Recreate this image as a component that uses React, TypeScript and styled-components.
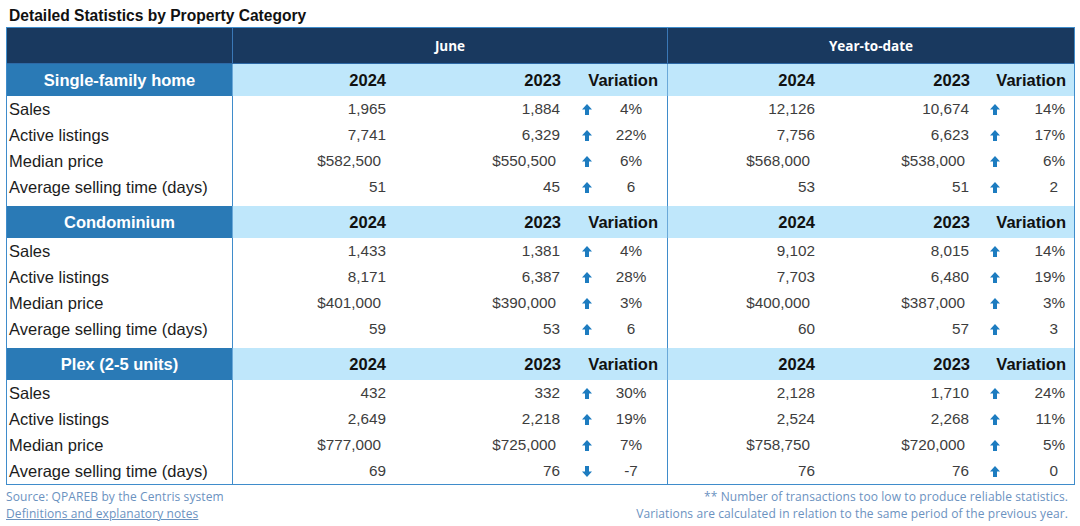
import React from 'react';
import styled, { createGlobalStyle } from 'styled-components';

type Dir = 'up' | 'down';

interface StatRow {
	label: string;
	june: [string, string, Dir, string];
	ytd: [string, string, Dir, string];
}

interface Category {
	name: string;
	rows: StatRow[];
}

const categories: Category[] = [
	{
		name: 'Single-family home',
		rows: [
			{ label: 'Sales', june: ['1,965', '1,884', 'up', '4%'], ytd: ['12,126', '10,674', 'up', '14%'] },
			{ label: 'Active listings', june: ['7,741', '6,329', 'up', '22%'], ytd: ['7,756', '6,623', 'up', '17%'] },
			{ label: 'Median price', june: ['$582,500', '$550,500', 'up', '6%'], ytd: ['$568,000', '$538,000', 'up', '6%'] },
			{ label: 'Average selling time (days)', june: ['51', '45', 'up', '6'], ytd: ['53', '51', 'up', '2'] },
		],
	},
	{
		name: 'Condominium',
		rows: [
			{ label: 'Sales', june: ['1,433', '1,381', 'up', '4%'], ytd: ['9,102', '8,015', 'up', '14%'] },
			{ label: 'Active listings', june: ['8,171', '6,387', 'up', '28%'], ytd: ['7,703', '6,480', 'up', '19%'] },
			{ label: 'Median price', june: ['$401,000', '$390,000', 'up', '3%'], ytd: ['$400,000', '$387,000', 'up', '3%'] },
			{ label: 'Average selling time (days)', june: ['59', '53', 'up', '6'], ytd: ['60', '57', 'up', '3'] },
		],
	},
	{
		name: 'Plex (2-5 units)',
		rows: [
			{ label: 'Sales', june: ['432', '332', 'up', '30%'], ytd: ['2,128', '1,710', 'up', '24%'] },
			{ label: 'Active listings', june: ['2,649', '2,218', 'up', '19%'], ytd: ['2,524', '2,268', 'up', '11%'] },
			{ label: 'Median price', june: ['$777,000', '$725,000', 'up', '7%'], ytd: ['$758,750', '$720,000', 'up', '5%'] },
			{ label: 'Average selling time (days)', june: ['69', '76', 'down', '-7'], ytd: ['76', '76', 'up', '0'] },
		],
	},
];

const navy = '#19395f';
const catBlue = '#2a7ab6';
const paleBlue = '#bfe7fb';
const lineBlue = '#3f8ccb';

const GlobalStyle = createGlobalStyle`
	html, body {
		margin: 0;
		padding: 0;
		background: #ffffff;
	}
	body {
		font-family: 'Liberation Sans', Arial, sans-serif;
	}
`;

const COLS = '225px 160px 174px 41px 60px 154px 154px 40px 59px';

const Arrow: React.FC<{ dir: Dir }> = ({ dir }) => (
	<svg
		width="10"
		height="11"
		viewBox="0 0 10 11"
		style={{ transform: dir === 'down' ? 'rotate(180deg)' : undefined }}
	>
		<polygon points="5,0 10,5.5 7,5.5 7,11 3,11 3,5.5 0,5.5" fill="#1d7cc0" />
	</svg>
);

const isPlain = (v: string) => !v.startsWith('$');

const App: React.FC = () => (
	<Page>
		<GlobalStyle />
		<Title>Detailed Statistics by Property Category</Title>
		<Table>
			<TopHeader>
				<TopCell />
				<TopCell $divider $span={4}>June</TopCell>
				<TopCell $divider $span={4}>Year-to-date</TopCell>
			</TopHeader>
			{categories.map((cat) => (
				<Section key={cat.name}>
					<CategoryRow>
						<CategoryName>{cat.name}</CategoryName>
						<HeadCell $divider $pad={6}>2024</HeadCell>
						<HeadCell $pad={5}>2023</HeadCell>
						<HeadCell $span={2} $pad={9}>Variation</HeadCell>
						<HeadCell $divider $pad={6}>2024</HeadCell>
						<HeadCell $pad={5}>2023</HeadCell>
						<HeadCell $span={2} $pad={8}>Variation</HeadCell>
					</CategoryRow>
					{cat.rows.map((r, i) => {
						const last = i === cat.rows.length - 1 && cat !== categories[categories.length - 1];
						return (
							<DataRow key={r.label} $last={last}>
								<Label>{r.label}</Label>
								<Value $divider $pad={isPlain(r.june[0]) ? 6 : 11}>{r.june[0]}</Value>
								<Value $pad={isPlain(r.june[1]) ? 6 : 10}>{r.june[1]}</Value>
								<ArrowCell><Arrow dir={r.june[2]} /></ArrowCell>
								<Variation $centered>{r.june[3]}</Variation>
								<Value $divider $pad={isPlain(r.ytd[0]) ? 6 : 11}>{r.ytd[0]}</Value>
								<Value $pad={isPlain(r.ytd[1]) ? 6 : 10}>{r.ytd[1]}</Value>
								<ArrowCell><Arrow dir={r.ytd[2]} /></ArrowCell>
								<Variation $pad={r.ytd[3].endsWith('%') ? 9 : 16}>{r.ytd[3]}</Variation>
							</DataRow>
						);
					})}
				</Section>
			))}
		</Table>
		<Footer>
			<FootCol>
				<span>Source: QPAREB by the Centris system</span>
				<FootLink>Definitions and explanatory notes</FootLink>
			</FootCol>
			<FootCol $right>
				<span>** Number of transactions too low to produce reliable statistics.</span>
				<span>Variations are calculated in relation to the same period of the previous year.</span>
			</FootCol>
		</Footer>
	</Page>
);

export default App;

const Page = styled.div`
	width: 1080px;
	height: 526px;
	padding-left: 6px;
	box-sizing: border-box;
	overflow: hidden;
`;

const Title = styled.div`
	padding: 7px 0 2px 3px;
	line-height: 18px;
	font-size: 15.6px;
	font-weight: bold;
	color: #111;
`;

const Table = styled.div`
	width: 1069px;
	box-sizing: border-box;
	border: 1px solid ${lineBlue};
`;

const TopHeader = styled.div`
	display: grid;
	grid-template-columns: ${COLS};
	height: 36px;
	background: ${navy};
	border-bottom: 1px solid #2d69a6;
	box-sizing: border-box;
`;

const TopCell = styled.div<{ $divider?: boolean; $span?: number }>`
	grid-column: span ${(p) => p.$span ?? 1};
	display: flex;
	align-items: center;
	justify-content: center;
	color: #fff;
	font-family: 'Open Sans', 'Liberation Sans', sans-serif;
	font-weight: bold;
	font-size: 13.5px;
	border-left: ${(p) => (p.$divider ? '1px solid #3a78b6' : 'none')};
`;

const Section = styled.div``;

const CategoryRow = styled.div`
	display: grid;
	grid-template-columns: ${COLS};
	height: 32px;
	background: ${paleBlue};
`;

const CategoryName = styled.div`
	background: ${catBlue};
	color: #fff;
	font-weight: bold;
	font-size: 16.5px;
	display: flex;
	align-items: center;
	justify-content: center;
`;

const HeadCell = styled.div<{ $divider?: boolean; $span?: number; $pad: number }>`
	grid-column: span ${(p) => p.$span ?? 1};
	display: flex;
	align-items: center;
	justify-content: flex-end;
	padding-right: ${(p) => p.$pad}px;
	font-weight: bold;
	font-size: 16.5px;
	color: #111;
	border-left: ${(p) => (p.$divider ? `1px solid #6aa9d9` : 'none')};
`;

const DataRow = styled.div<{ $last?: boolean }>`
	display: grid;
	grid-template-columns: ${COLS};
	height: ${(p) => (p.$last ? 32 : 26)}px;
	& > div {
		padding-bottom: ${(p) => (p.$last ? 6 : 0)}px;
	}
`;

const Label = styled.div`
	display: flex;
	align-items: center;
	padding-left: 2px;
	font-size: 16.5px;
	color: #1c1c1c;
	white-space: nowrap;
`;

const Value = styled.div<{ $divider?: boolean; $pad: number }>`
	display: flex;
	align-items: center;
	justify-content: flex-end;
	padding-right: ${(p) => p.$pad}px;
	font-size: 15.3px;
	color: #3d3d3d;
	border-left: ${(p) => (p.$divider ? `1px solid ${lineBlue}` : 'none')};
`;

const ArrowCell = styled.div`
	display: flex;
	align-items: center;
	justify-content: center;
`;

const Variation = styled.div<{ $centered?: boolean; $pad?: number }>`
	display: flex;
	align-items: center;
	justify-content: ${(p) => (p.$centered ? 'center' : 'flex-end')};
	padding-right: ${(p) => (p.$centered ? 12 : p.$pad ?? 0)}px;
	font-size: 15.3px;
	color: #3d3d3d;
`;

const Footer = styled.div`
	width: 1062px;
	display: flex;
	justify-content: space-between;
	padding-top: 3px;
	font-family: 'Open Sans', 'Liberation Sans', sans-serif;
	font-size: 12px;
	letter-spacing: 0.1px;
	line-height: 17px;
	color: #6b92bf;
`;

const FootCol = styled.div<{ $right?: boolean }>`
	display: flex;
	flex-direction: column;
	align-items: ${(p) => (p.$right ? 'flex-end' : 'flex-start')};
`;

const FootLink = styled.span`
	text-decoration: underline;
`;
